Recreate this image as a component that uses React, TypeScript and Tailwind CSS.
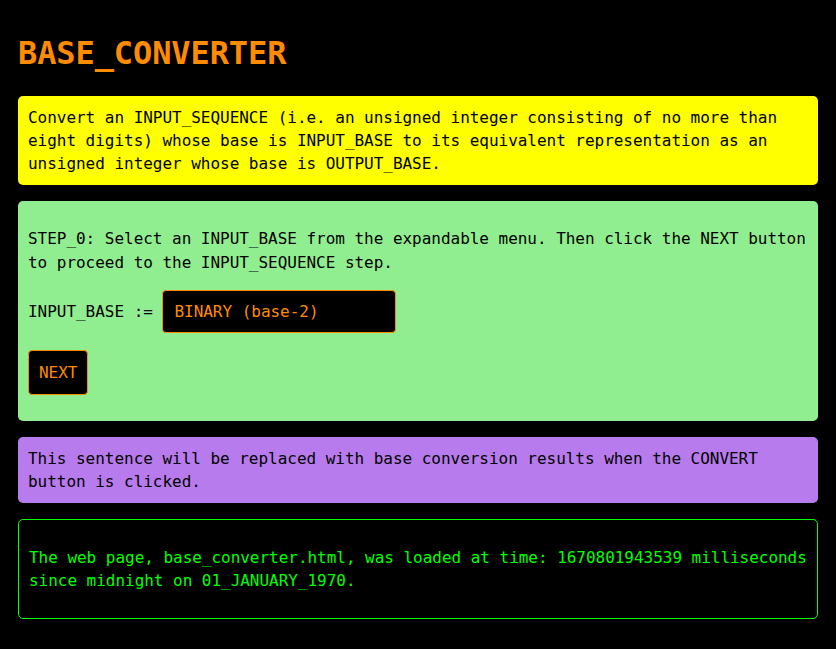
import React from "react";

export default function App() {
  const mono = { fontFamily: '"DejaVu Sans Mono", monospace' };
  return (
    <div className="min-h-[649px] bg-black px-[18px] pt-[35px] pb-[30px] text-[16px] leading-[23px] tracking-[-0.03px]" style={mono}>
      <h1 className="text-[32px] leading-[37px] font-bold text-[#ff8c00] mb-[24px] tracking-[-0.1px]">BASE_CONVERTER</h1>

      <div className="bg-[#ffff00] text-black rounded-[5px] p-[10px]">
        Convert an INPUT_SEQUENCE (i.e. an unsigned integer consisting of no more than eight digits) whose base is INPUT_BASE to its equivalent representation as an unsigned integer whose base is OUTPUT_BASE.
      </div>

      <div className="bg-[#90ee90] text-black rounded-[5px] mt-[16px] px-[10px] pt-[26px] pb-[26px]">
        <p className="leading-[24px]">
          STEP_0: Select an INPUT_BASE from the expandable menu. Then click the NEXT button to proceed to the INPUT_SEQUENCE step.
        </p>
        <div className="flex items-center mt-[15px]">
          <span className="whitespace-pre">INPUT_BASE := </span>
          <div className="w-[234px] h-[43px] bg-black border border-[#ff8c00] rounded-[4px] text-[#ff8c00] flex items-center pl-[11px]">
            BINARY (base-2)
          </div>
        </div>
        <div className="mt-[17px] flex">
          <button className="h-[45px] px-[10px] bg-black border border-[#ff8c00] rounded-[4px] text-[#ff8c00] tracking-[-0.03px]" style={mono}>
            NEXT
          </button>
        </div>
      </div>

      <div className="bg-[#b87bed] text-black rounded-[5px] mt-[16px] p-[10px]">
        This sentence will be replaced with base conversion results when the CONVERT button is clicked.
      </div>

      <div className="bg-black text-[#00ff00] border border-[#00ff00] rounded-[5px] mt-[16px] px-[10px] pt-[26px] pb-[26px]">
        The web page, base_converter.html, was loaded at time: 1670801943539 milliseconds since midnight on 01_JANUARY_1970.
      </div>
    </div>
  );
}
